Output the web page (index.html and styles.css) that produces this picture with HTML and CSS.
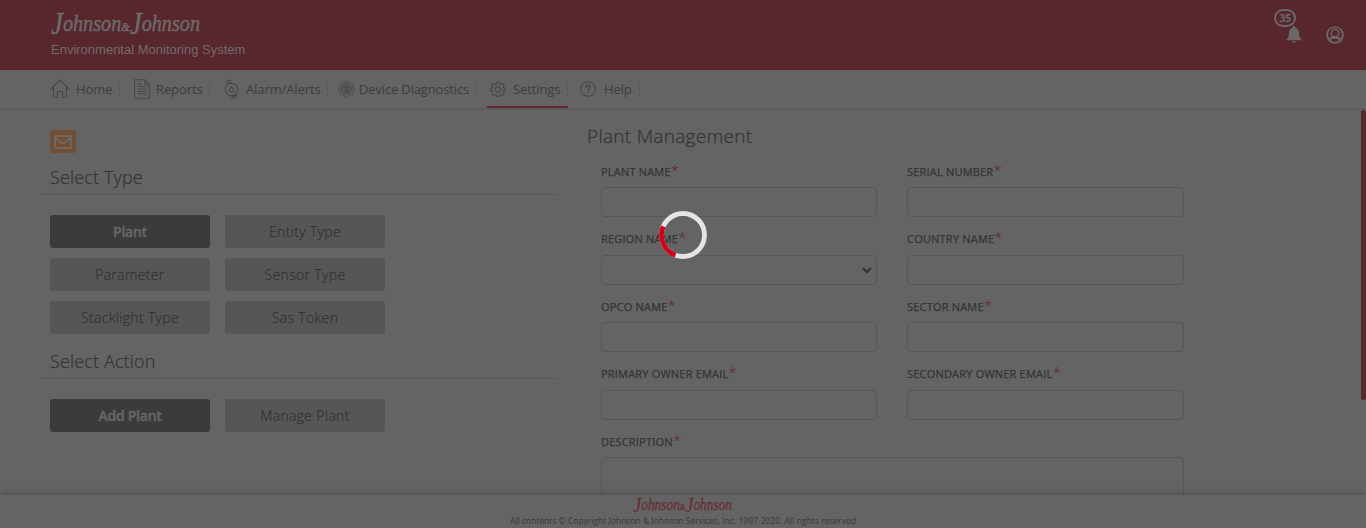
FILE: index.html
```html
<!DOCTYPE html>
<html lang="en">
<head>
<meta charset="utf-8">
<title>Environmental Monitoring System</title>
<link rel="stylesheet" href="styles.css">
</head>
<body>
<div class="app">
  <header class="header">
    <div class="brand">
      <svg class="brand-logo" width="154" height="30" viewBox="0 0 154 30"><text x="2" y="20" textLength="149" lengthAdjust="spacingAndGlyphs"><tspan class="cap" dy="3">J</tspan><tspan dy="-3">ohnson</tspan><tspan class="amp">&amp;</tspan><tspan class="cap" dy="3">J</tspan><tspan dy="-3">ohnson</tspan></text></svg>
      <div class="brand-name">Environmental Monitoring System</div>
    </div>
    <div class="user-tools">
      <div class="notify">
        <svg width="18" height="18" viewBox="0 0 18 18" fill="#6c6868"><path d="M9 0C8 0 7.600.7 7.600 1.700 5 2.400 3.900 4.500 3.900 7c0 3.600-1 5.600-3.100 7.300h16.400C15.100 12.600 14.100 10.600 14.100 7c0-2.500-1.100-4.600-3.700-5.300C10.400.7 10 0 9 0zM6.800 15.200a2.300 2.300 0 0 0 4.400 0z"/></svg>
        <span class="badge">35</span>
      </div>
      <svg class="user-icon" width="18" height="18" viewBox="0 0 18 18"><circle cx="9" cy="9" r="8.800" fill="#6c6868"/><path fill="#58262d" d="M3.300 12.400A6.900 6.900 0 1 1 14.700 12.400C13.500 11.300 12.600 10.900 11.700 10.600a4.500 4.500 0 1 0-5.400 0C5.400 10.900 4.500 11.300 3.300 12.400z"/><circle cx="9" cy="7" r="3.100" fill="#58262d"/><path fill="#58262d" d="M4.300 14q4.700-3 9.400 0-4.700 3.800-9.400 0z"/></svg>
    </div>
  </header>

  <nav class="nav">
    <a class="nav-item home"><svg width="20" height="20" viewBox="0 0 20 20"><path d="M.5 10.500 10 1l9.500 9.500M3.500 8v10.500h4v-6h5v6h4V8"/></svg><span>Home</span></a>
    <a class="nav-item reports"><svg width="16" height="20" viewBox="0 0 16 20"><path d="M.7.7h10l4.600 4.600v14H.7zM10.700.7v4.600h4.600M3.500 7.500h9M3.500 10h9M3.500 12.500h9M3.500 15h9M3.500 5h4"/></svg><span>Reports</span></a>
    <a class="nav-item alarm"><svg width="16" height="20" viewBox="0 0 16 20"><circle cx="7.500" cy="10.500" r="6.200"/><path d="M7.500 7.400c-3 3.600-2.600 5.700 0 5.700s3-2.100 0-5.700zM1.500 2.500c2 0 2.500-1.700 6-1.200M2.500 4.700c1.800 0 2.200-1.500 5-1.200M6.500 19.200c3.500.5 4-1.200 6.500-1.400M8 17.500c2.500.2 3-1.300 5-1.500"/></svg><span>Alarm/Alerts</span></a>
    <a class="nav-item device"><svg class="atom" width="17" height="18" viewBox="0 0 17 18"><ellipse cx="8.500" cy="9" rx="3.800" ry="8.300"/><ellipse cx="8.500" cy="9" rx="8" ry="3.800"/><ellipse cx="8.500" cy="9" rx="3.800" ry="8.300" transform="rotate(45 8.500 9)"/><ellipse cx="8.500" cy="9" rx="3.800" ry="8.300" transform="rotate(-45 8.500 9)"/><rect class="core" x="6.500" y="5.500" width="4" height="7.500"/></svg><span>Device Diagnostics</span></a>
    <a class="nav-item settings active"><svg width="16" height="16" viewBox="0 0 16 16"><path d="M6.900 1h2.200l.5 1.900 1.300.5 1.700-1 1.600 1.600-1 1.700.5 1.300 1.700.5v2l-1.700.5-.5 1.300 1 1.700-1.600 1.600-1.700-1-1.300.5-.5 1.700H6.900l-.5-1.700-1.300-.5-1.700 1L1.800 13l1-1.700L2.300 10 .6 9.500v-2L2.300 7l.5-1.300-1-1.700 1.600-1.600 1.700 1 1.300-.5z"/><circle cx="8" cy="8.400" r="2.700"/></svg><span>Settings</span></a>
    <a class="nav-item help"><svg width="16" height="16" viewBox="0 0 16 16"><circle cx="8" cy="8" r="7.200"/><path class="question" d="M6 6.300c.1-2.600 4-2.500 4-.2C10 7.600 8 7.500 8 9.400M8 10.700v1.400"/></svg><span>Help</span></a>
  </nav>

  <main class="main">
    <section class="sidebar">
      <div class="mail"><svg width="18" height="14" viewBox="0 0 18 14"><path d="M1.200 1h15.600v12H1.200zM1.200 2.500 9 9l7.800-6.500"/></svg></div>
      <h2 class="side-title">Select Type</h2>
      <div class="options">
        <button class="option selected">Plant</button><button class="option">Entity Type</button>
        <button class="option">Parameter</button><button class="option">Sensor Type</button>
        <button class="option">Stacklight Type</button><button class="option">Sas Token</button>
      </div>
      <h2 class="side-title action">Select Action</h2>
      <div class="options">
        <button class="option selected">Add Plant</button><button class="option">Manage Plant</button>
      </div>
    </section>

    <section class="content">
      <h1 class="page-title">Plant Management</h1>
      <div class="form">
        <div class="field"><label>PLANT NAME<i>*</i></label><div class="input"></div></div>
        <div class="field"><label>SERIAL NUMBER<i>*</i></label><div class="input"></div></div>
        <div class="field"><label>REGION NAME<i>*</i></label><div class="input select"><svg width="10" height="7" viewBox="0 0 10 7"><path d="M1 1l4 4 4-4"/></svg></div></div>
        <div class="field"><label>COUNTRY NAME<i>*</i></label><div class="input"></div></div>
        <div class="field"><label>OPCO NAME<i>*</i></label><div class="input"></div></div>
        <div class="field"><label>SECTOR NAME<i>*</i></label><div class="input"></div></div>
        <div class="field"><label>PRIMARY OWNER EMAIL<i>*</i></label><div class="input"></div></div>
        <div class="field"><label>SECONDARY OWNER EMAIL<i>*</i></label><div class="input"></div></div>
        <div class="field wide"><label>DESCRIPTION<i>*</i></label><div class="input area"></div></div>
      </div>
    </section>
    <div class="scrollbar"></div>
  </main>

  <footer class="footer">
    <svg class="footer-logo" width="102" height="20" viewBox="0 0 154 30"><text x="2" y="20" textLength="149" lengthAdjust="spacingAndGlyphs"><tspan class="cap" dy="3">J</tspan><tspan dy="-3">ohnson</tspan><tspan class="amp">&amp;</tspan><tspan class="cap" dy="3">J</tspan><tspan dy="-3">ohnson</tspan></text></svg>
    <div class="copyright">All contents © Copyright Johnson &amp; Johnson Services, Inc. 1997-2020. All rights reserved</div>
  </footer>
  <svg class="spinner" width="48" height="48" viewBox="0 0 48 48"><circle cx="24" cy="24" r="21.500" stroke="#e4e4e4"/><path d="M16.500 44.150A21.500 21.500 0 0 1 4.300 15.400" stroke="#d0021b"/></svg>
</div>
</body>
</html>
```
FILE: styles.css
```css
* { box-sizing: border-box; }
body { margin: 0; font-family: "Open Sans", sans-serif; background: #646464; color: #343434; }
.app { position: relative; height: 528px; display: flex; flex-direction: column; overflow: hidden; }
.header { height: 70px; flex: none; background: #58262d; display: flex; justify-content: space-between; padding: 11px 22px 0 49px; }
.brand-logo { display: block; overflow: visible; }
.brand-logo text, .footer-logo text { font: italic 24px "Liberation Serif", serif; stroke-width: .5px; }
.cap { font-size: 32px; }
.amp { font-size: 13px; }
.brand-logo text { fill: #6e6a6a; stroke: #6e6a6a; }
.brand-name { font: 13px/16px "Liberation Sans", sans-serif; color: #706c6c; margin: 1px 0 0 2px; }
.user-tools { display: flex; gap: 23px; padding-top: 15px; }
.notify { position: relative; width: 18px; height: 18px; }
.badge { position: absolute; left: -11px; top: -17px; width: 22px; height: 18px; border: 2px solid #6c6868; border-radius: 9px; font: bold 11px/14px "Open Sans", sans-serif; letter-spacing: -.5px; text-align: center; color: #6c6868; }
.nav { height: 40px; flex: none; border-bottom: 2px solid #5c5c5c; display: flex; padding-left: 43px; }
.nav-item { display: flex; align-items: center; height: 38px; padding-left: 7px; font-size: 13px; letter-spacing: -.1px; color: #3d3d3d; white-space: nowrap; position: relative; }
.nav-item::after { content: ""; margin-left: auto; height: 14px; border-right: 1px dashed #555; }
.nav-item svg { fill: none; stroke: #474747; stroke-width: 1.100; flex: none; }
.nav-item .atom { stroke: #535353; }
.atom .core { fill: #4d4d4d; }
.nav-item .question { stroke-width: 1.500; }
.home { width: 77px; } .home svg { margin-right: 6px; }
.reports { width: 90px; padding-left: 14px; } .reports svg { margin-right: 6px; }
.alarm { width: 118px; padding-left: 14px; } .alarm svg { margin-right: 6px; }
.device { width: 149px; padding-left: 10px; letter-spacing: -.15px; } .device svg { margin-right: 4px; }
.settings { width: 91px; padding-left: 13px; } .settings svg { margin-right: 7px; }
.settings::before { content: ""; position: absolute; left: 10px; right: 0; bottom: 0; height: 2px; background: #65282d; }
.help { width: 72px; padding-left: 12px; } .help svg { margin-right: 8px; }
.main { flex: 1; min-height: 0; display: flex; position: relative; overflow: hidden; }
.sidebar { width: 516px; margin-left: 40px; padding-top: 20px; }
.mail { width: 26px; height: 23px; margin-left: 10px; border-radius: 3px; background: #704f37; display: flex; align-items: center; justify-content: center; }
.mail svg { fill: none; stroke: #736d69; stroke-width: 1.500; }
.side-title { margin: 0; height: 42px; padding: 11px 10px 0; border-bottom: 1px solid #575757; font-size: 18px; line-height: 27px; font-weight: 300; letter-spacing: .15px; -webkit-text-stroke: .25px; }
.side-title.action { height: 45px; padding-top: 14px; }
.options { display: grid; grid-template-columns: 160px 160px; gap: 10px 15px; padding: 20px 10px 0; }
.option { height: 33px; padding: 0; border: 0; border-radius: 3px; background: #565656; color: #303030; font: 300 14px/33px "Open Sans", sans-serif; letter-spacing: .33px; -webkit-text-stroke: .15px; }
.option.selected { background: #3b3b3b; color: #666; font-weight: 600; letter-spacing: -.25px; -webkit-text-stroke: .4px; }
.content { width: 600px; margin-left: 30px; padding-top: 11px; }
.page-title { margin: 0; padding-left: 1px; font-size: 19px; line-height: 30px; font-weight: 300; letter-spacing: .28px; -webkit-text-stroke: .25px; }
.form { display: grid; grid-template-columns: 276px 277px; column-gap: 30px; padding: 9px 0 0 15px; }
.field { height: 67.500px; }
.field label { display: block; height: 27px; line-height: 24px; font-size: 11px; font-weight: 400; letter-spacing: .2px; -webkit-text-stroke: .25px; }
.field:nth-child(3) label, .field:nth-child(4) label, .field:nth-child(7) label, .field:nth-child(8) label { height: 27.500px; line-height: 23px; margin-top: -.5px; }
.field i { font-size: 15px; font-style: normal; font-weight: 300; -webkit-text-stroke: 0; color: #602226; line-height: 1; }
.input { height: 30px; border: 1px solid #575757; border-radius: 4px; }
.select { display: flex; justify-content: flex-end; align-items: center; padding: 1px 4px 0 0; }
.select svg { fill: none; stroke: #303030; stroke-width: 2; }
.wide { grid-column: 1 / 3; } .area { height: 70px; }
.scrollbar { position: absolute; right: 0; top: 0; width: 5px; height: 290px; background: #58262d; border-radius: 3px; }
.footer { position: relative; height: 33px; flex: none; background: #646464; box-shadow: 0 0 8px #484848; display: flex; flex-direction: column; align-items: center; }
.footer-logo { margin-top: 2px; overflow: visible; }
.footer-logo text { fill: #673034; stroke: #673034; }
.copyright { font-size: 8.500px; line-height: 10px; margin-top: -1px; white-space: nowrap; color: #393939; }
.spinner { position: absolute; left: 659px; top: 211px; fill: none; stroke-width: 4.800; }
```
